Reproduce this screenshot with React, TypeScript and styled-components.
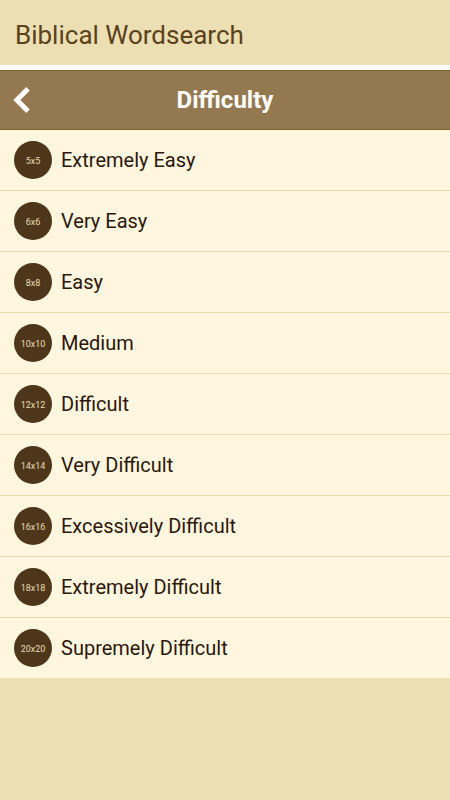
import React from "react";
import styled, { createGlobalStyle } from "styled-components";

const GlobalStyle = createGlobalStyle`
  * { box-sizing: border-box; }
  body {
    margin: 0;
    background: #ecdfb4;
    font-family: Roboto, "Liberation Sans", sans-serif;
  }
`;

const TitleBar = styled.header`
  height: 70px;
  padding: 0 15px;
  display: flex;
  align-items: center;
  border-bottom: 5px solid #fff;
`;

const AppTitle = styled.h1`
  margin: 0;
  padding-top: 4px;
  color: #5b421b;
  font-size: 26px;
  line-height: 32px;
  font-weight: 400;
`;

const NavBar = styled.nav`
  height: 60px;
  padding: 0 12px;
  display: grid;
  grid-template-columns: 20px 1fr 20px;
  align-items: center;
  border: solid #80642a;
  border-width: 1px 0;
  background: #94784f;
  color: #fff;
`;

const BackButton = styled.button`
  display: flex;
  padding: 0;
  border: 0;
  background: none;
  color: inherit;
  cursor: pointer;
`;

const NavTitle = styled.h2`
  margin: 0;
  text-align: center;
  font-size: 24px;
  line-height: 32px;
  font-weight: 700;
`;

const List = styled.ul`
  margin: 0;
  padding: 0;
  list-style: none;
  background: #fff6df;
`;

const Item = styled.li`
  & + & { border-top: 1px solid #e9dbac; }
`;

const Row = styled.button`
  width: 100%;
  height: 60px;
  padding: 0 14px;
  display: flex;
  align-items: center;
  gap: 9px;
  border: 0;
  background: none;
  color: #2e1608;
  font: inherit;
  font-size: 20px;
  line-height: 24px;
  text-align: left;
  cursor: pointer;
`;

const Badge = styled.span`
  flex: none;
  width: 38px;
  height: 38px;
  padding-top: 1px;
  display: flex;
  align-items: center;
  justify-content: center;
  border-radius: 50%;
  background: #4d361a;
  color: #e9dbb2;
  font-size: 9px;
  line-height: 12px;
`;

const levels = [
  { size: 5, name: "Extremely Easy" },
  { size: 6, name: "Very Easy" },
  { size: 8, name: "Easy" },
  { size: 10, name: "Medium" },
  { size: 12, name: "Difficult" },
  { size: 14, name: "Very Difficult" },
  { size: 16, name: "Excessively Difficult" },
  { size: 18, name: "Extremely Difficult" },
  { size: 20, name: "Supremely Difficult" },
];

export default function App() {
  return (
    <>
      <GlobalStyle />
      <TitleBar>
        <AppTitle>Biblical Wordsearch</AppTitle>
      </TitleBar>
      <NavBar>
        <BackButton type="button" aria-label="Back">
          <svg width="20" height="28" viewBox="0 0 20 28" fill="none" stroke="currentColor" strokeWidth="5" aria-hidden="true">
            <path d="M16 2.8 4.9 14 16 25.2" />
          </svg>
        </BackButton>
        <NavTitle>Difficulty</NavTitle>
      </NavBar>
      <main>
        <List>
          {levels.map(({ size, name }) => (
            <Item key={size}>
              <Row type="button">
                <Badge>{size}x{size}</Badge>
                {name}
              </Row>
            </Item>
          ))}
        </List>
      </main>
    </>
  );
}
